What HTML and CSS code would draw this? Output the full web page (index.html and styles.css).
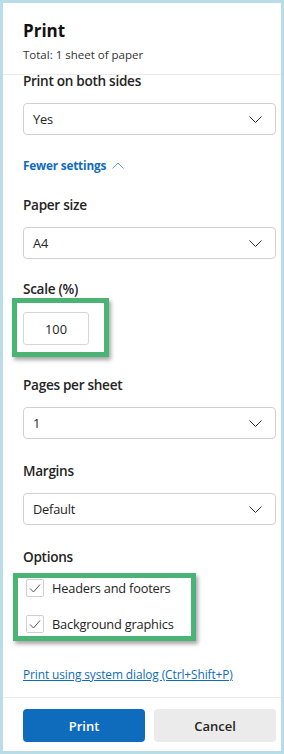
FILE: index.html
```html
<!DOCTYPE html>
<html lang="en">
<head>
    <meta charset="UTF-8">
    <meta name="viewport" content="width=device-width, initial-scale=1.0">
    <title>Print</title>
    <link rel="stylesheet" href="styles.css">
</head>
<body>
    <div class="frame">
        <div class="panel">
            <div class="header">
                <h1>Print</h1>
                <p class="total">Total: 1 sheet of paper</p>
            </div>

            <div class="settings">
                <label class="label first">Print on both sides</label>
                <div class="select">
                    <span>Yes</span>
                    <svg class="chev" width="13" height="7" viewBox="0 0 13 7"><path d="M0.5 0.5l6 6 6-6" fill="none" stroke="#333" stroke-width="1"/></svg>
                </div>

                <a class="fewer" href="#">Fewer settings
                    <svg width="12" height="7" viewBox="0 0 12 7"><path d="M0.5 6.5l5.5-5.5 5.5 5.5" fill="none" stroke="#5a9bd8" stroke-width="1"/></svg>
                </a>

                <label class="label">Paper size</label>
                <div class="select">
                    <span>A4</span>
                    <svg class="chev" width="13" height="7" viewBox="0 0 13 7"><path d="M0.5 0.5l6 6 6-6" fill="none" stroke="#333" stroke-width="1"/></svg>
                </div>

                <label class="label">Scale (%)</label>
                <div class="scale-wrap">
                    <input class="scale" type="text" value="100">
                    <div class="mark mark-scale"></div>
                </div>

                <label class="label gap-lg">Pages per sheet</label>
                <div class="select">
                    <span>1</span>
                    <svg class="chev" width="13" height="7" viewBox="0 0 13 7"><path d="M0.5 0.5l6 6 6-6" fill="none" stroke="#333" stroke-width="1"/></svg>
                </div>

                <label class="label gap-md">Margins</label>
                <div class="select">
                    <span>Default</span>
                    <svg class="chev" width="13" height="7" viewBox="0 0 13 7"><path d="M0.5 0.5l6 6 6-6" fill="none" stroke="#333" stroke-width="1"/></svg>
                </div>

                <label class="label gap-md">Options</label>
                <div class="options">
                    <div class="row">
                        <span class="box"><svg width="12" height="10" viewBox="0 0 12 10"><path d="M1 5.5l3.5 3.5L11 1.5" fill="none" stroke="#555" stroke-width="1"/></svg></span>
                        Headers and footers
                    </div>
                    <div class="row second">
                        <span class="box"><svg width="12" height="10" viewBox="0 0 12 10"><path d="M1 5.5l3.5 3.5L11 1.5" fill="none" stroke="#555" stroke-width="1"/></svg></span>
                        Background graphics
                    </div>
                    <div class="mark mark-options"></div>
                </div>

                <a class="system" href="#">Print using system dialog (Ctrl+Shift+P)</a>
            </div>

            <div class="footer">
                <button class="btn primary">Print</button>
                <button class="btn">Cancel</button>
            </div>
        </div>
    </div>
</body>
</html>
```

FILE: styles.css
```css
body {
    margin: 0;
    font-family: "Open Sans", "Noto Sans", sans-serif;
    color: #242424;
}
.frame {
    height: 754px;
    box-sizing: border-box;
    border: 3px solid #b8dde6;
    background: #b8dde6;
}
.panel {
    height: 100%;
    display: flex;
    flex-direction: column;
    background: white;
    overflow: hidden;
}
.header {
    padding: 16px 20px 11px;
    border-bottom: 1px solid #ebebeb;
}
h1 {
    margin: 0;
    font-size: 17px;
    line-height: 24px;
    font-weight: 700;
    color: #111;
}
.total {
    margin: 4px 0 0;
    font-size: 11.5px;
    line-height: 16px;
    color: #333;
}
.settings {
    flex: 1;
    padding: 0 5px 0 20px;
    margin-top: -4px;
}
.label {
    display: block;
    margin-top: 20px;
    font-size: 13.6px;
    line-height: 20px;
    font-weight: 600;
    letter-spacing: -0.3px;
}
.label.first {
    margin-top: 0;
}
.label.gap-lg {
    margin-top: 30px;
}
.label.gap-md {
    margin-top: 22px;
}
.select {
    margin-top: 12px;
    height: 32px;
    box-sizing: border-box;
    border: 1px solid #d1d1d1;
    border-radius: 4px;
    display: flex;
    align-items: center;
    justify-content: space-between;
    padding: 0 13px 0 9px;
    font-size: 12.8px;
    letter-spacing: -0.2px;
    color: #242424;
}
.fewer {
    display: flex;
    align-items: center;
    gap: 6px;
    margin-top: 20px;
    line-height: 20px;
    font-size: 11.8px;
    font-weight: 700;
    letter-spacing: -0.2px;
    color: #0f6cbd;
    text-decoration: none;
}
.scale-wrap {
    position: relative;
    margin-top: 13px;
    width: 66px;
}
.scale {
    display: block;
    width: 66px;
    height: 33px;
    box-sizing: border-box;
    border: 1px solid #d6d6d6;
    border-radius: 3px;
    text-align: center;
    font-family: inherit;
    font-size: 12.8px;
    color: #242424;
    padding: 0;
}
.mark {
    position: absolute;
    box-sizing: border-box;
    border: 5px solid #4bb374;
    box-shadow: 2px 3px 4px rgba(0, 0, 0, 0.35);
    pointer-events: none;
}
.mark-scale {
    left: -11px;
    top: -14px;
    width: 97px;
    height: 59px;
}
.options {
    position: relative;
    margin-top: 11px;
}
.row {
    display: flex;
    align-items: center;
    gap: 8px;
    height: 20px;
    padding-left: 3px;
    font-size: 12.8px;
    letter-spacing: -0.2px;
}
.row.second {
    margin-top: 16px;
}
.box {
    width: 18px;
    height: 18px;
    box-sizing: border-box;
    border: 1px solid #d0d0d0;
    border-radius: 2px;
    display: flex;
    align-items: center;
    justify-content: center;
}
.mark-options {
    left: -10px;
    top: -5px;
    width: 183px;
    height: 68px;
}
.system {
    display: block;
    margin-top: 30px;
    line-height: 20px;
    font-size: 11.9px;
    letter-spacing: -0.1px;
    color: #0f6cbd;
}
.footer {
    display: flex;
    gap: 9px;
    padding: 11px 5px 9px 20px;
    border-top: 1px solid #ebebeb;
}
.btn {
    flex: 1;
    height: 33px;
    border: none;
    border-radius: 4px;
    background: #ebebeb;
    font-family: inherit;
    font-size: 13px;
    font-weight: 600;
    color: #242424;
}
.btn.primary {
    background: #0f6cbd;
    color: white;
}
```
